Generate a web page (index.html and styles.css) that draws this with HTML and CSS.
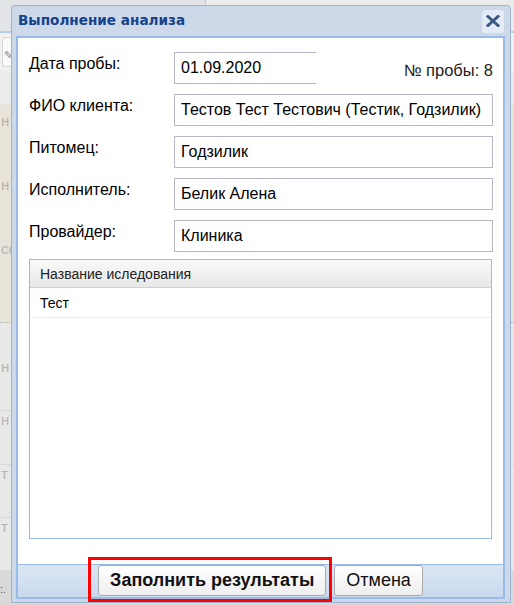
FILE: index.html
```html
<!DOCTYPE html>
<html lang="ru">
<head>
<meta charset="utf-8">
<title>Выполнение анализа</title>
<link rel="stylesheet" href="styles.css">
</head>
<body>
<div class="app">
  <div class="app-top">
    <div class="app-top-l"></div>
    <div class="app-top-r"></div>
  </div>
  <div class="app-line"></div>
  <div class="app-tools"><span class="app-tool-box"><span class="app-pencil">✎</span></span></div>
  <div class="app-gray"></div>
  <div class="app-beige">
    <div class="app-row frag">н</div>
    <div class="app-row frag">н</div>
    <div class="app-row frag">се</div>
  </div>
  <div class="app-list">
    <div class="app-item frag">н</div>
    <div class="app-item frag">н</div>
    <div class="app-item frag">т</div>
    <div class="app-item frag">т</div>
  </div>
  <div class="app-foot">:.</div>
</div>

<div class="win">
  <div class="win-head">
    <span class="win-title">Выполнение анализа</span>
    <button class="win-close" type="button" aria-label="Закрыть">
      <svg width="14" height="12" viewBox="0 0 14 12"><path d="M2 1.5 L12 10.5 M12 1.5 L2 10.5" stroke="#3c5a80" stroke-width="3" stroke-linecap="square" fill="none"/></svg>
    </button>
  </div>
  <div class="win-body">
    <div class="form">
      <div class="row">
        <label class="lbl">Дата пробы:</label>
        <div class="field field-date">01.09.2020</div>
        <span class="num">№ пробы: 8</span>
      </div>
      <div class="row">
        <label class="lbl">ФИО клиента:</label>
        <div class="field">Тестов Тест Тестович (Тестик, Годзилик)</div>
      </div>
      <div class="row">
        <label class="lbl">Питомец:</label>
        <div class="field">Годзилик</div>
      </div>
      <div class="row">
        <label class="lbl">Исполнитель:</label>
        <div class="field">Белик Алена</div>
      </div>
      <div class="row">
        <label class="lbl">Провайдер:</label>
        <div class="field">Клиника</div>
      </div>
      <div class="grid">
        <div class="grid-head">Название иследования</div>
        <div class="grid-row">Тест</div>
      </div>
    </div>
    <div class="win-foot">
      <button class="btn btn-main" type="button">Заполнить результаты</button>
      <button class="btn" type="button">Отмена</button>
    </div>
  </div>
</div>
<div class="highlight"></div>
</body>
</html>
```
FILE: styles.css
```css
html, body {
  margin: 0;
  padding: 0;
  width: 514px;
  height: 605px;
  overflow: hidden;
}
body {
  position: relative;
  font-family: "Liberation Sans", Arial, sans-serif;
  background: #e9e9e9;
}

/* background application */
.app {
  display: flex;
  flex-direction: column;
  height: 605px;
}
.app-top {
  display: flex;
  height: 31px;
}
.app-top-l {
  width: 205px;
  background: #e2e4e8;
  border-right: 1px solid #c9c9c9;
}
.app-top-r {
  flex: 1;
  background: #ebebeb;
}
.app-line {
  height: 2px;
  background: #b9cde6;
}
.app-tools {
  height: 37px;
  background: #f2f2f2;
  display: flex;
  align-items: center;
  padding-left: 2px;
}
.app-tool-box {
  display: inline-flex;
  align-items: flex-end;
  justify-content: flex-end;
  width: 40px;
  height: 30px;
  border: 1px solid #d6d6d6;
  border-radius: 3px;
  background: #fafafa;
  box-sizing: border-box;
}
.app-pencil {
  font-size: 11px;
  color: #8a8a8a;
  margin-right: 28px;
  margin-bottom: 4px;
}
.app-gray {
  height: 34px;
  background: #ececec;
}
.app-beige {
  height: 219px;
  background: #e8e4d9;
  border-bottom: 1px dotted #a8b8d0;
  display: flex;
  flex-direction: column;
  padding-top: 8px;
  box-sizing: border-box;
}
.app-row {
  height: 64px;
}
.frag {
  font-size: 15px;
  color: #b4b4b4;
  padding-left: 1px;
}
.app-list {
  height: 248px;
  background: #e8e8e8;
  display: flex;
  flex-direction: column;
  padding-top: 35px;
  box-sizing: border-box;
}
.app-item {
  height: 64px;
  border-bottom: 1px solid #d8d8d8;
  box-sizing: border-box;
}
.app-foot {
  flex: 1;
  background: #d9d9d9;
  font-size: 11px;
  color: #555;
  padding-top: 12px;
}

/* window */
.win {
  position: absolute;
  left: 11px;
  top: 5px;
  width: 500px;
  height: 598px;
  box-sizing: border-box;
  border: 1px solid #9fb3cf;
  border-radius: 4px 4px 0 0;
  background: #cdd9e9;
  display: flex;
  flex-direction: column;
}
.win-head {
  height: 30px;
  flex: none;
  display: flex;
  align-items: center;
  justify-content: space-between;
  padding: 0 6px 0 6px;
}
.win-title {
  font-family: "DejaVu Sans", Verdana, sans-serif;
  font-weight: bold;
  font-size: 13.6px;
  color: #15428b;
  padding-bottom: 2px;
}
.win-close {
  width: 22px;
  height: 23px;
  padding: 0;
  margin: 0;
  border: none;
  border-radius: 3px;
  background: #e3ebf7;
  display: flex;
  align-items: center;
  justify-content: center;
}
.win-body {
  flex: 1;
  margin: 0 5px 3px 4px;
  border: 2px solid #99bbe8;
  background: #fff;
  display: flex;
  flex-direction: column;
}
.form {
  flex: 1;
  display: flex;
  flex-direction: column;
  padding: 14px 10px 25px 11px;
}
.row {
  display: flex;
  align-items: center;
  height: 32px;
  margin-bottom: 10px;
}
.row:nth-child(5) {
  margin-bottom: 7px;
}
.lbl {
  width: 145px;
  flex: none;
  align-self: flex-start;
  padding-top: 3px;
  font-size: 16px;
  color: #000;
}
.field {
  flex: 1;
  height: 32px;
  box-sizing: border-box;
  border: 1px solid #b5b8c8;
  padding: 0 6px;
  display: flex;
  align-items: center;
  font-size: 16px;
  color: #000;
  white-space: nowrap;
  overflow: hidden;
}
.field-date {
  flex: none;
  width: 142px;
  border-right: none;
}
.num {
  margin-left: auto;
  font-size: 16.5px;
  color: #222;
  padding-top: 4px;
}
.grid {
  flex: 1;
  border: 1px solid #99bbe8;
  margin-right: 1px;
  display: flex;
  flex-direction: column;
}
.grid-head {
  height: 27px;
  border-bottom: 1px solid #d0d0d0;
  background: linear-gradient(#f9f9f9, #e8e8e8);
  font-size: 14px;
  color: #222;
  padding-left: 10px;
  display: flex;
  align-items: center;
}
.grid-row {
  height: 29px;
  border-bottom: 1px solid #ededed;
  font-size: 14px;
  color: #000;
  padding-left: 10px;
  display: flex;
  align-items: center;
}
.win-foot {
  flex: none;
  height: 32px;
  border-top: 1px solid #99bbe8;
  background: linear-gradient(#dbe6f4, #c9d9ee);
  display: flex;
  justify-content: center;
  align-items: flex-start;
  gap: 8px;
}
.btn {
  height: 31px;
  box-sizing: border-box;
  border: 1px solid #ababab;
  border-radius: 3px;
  background: linear-gradient(#ffffff, #eeeeee);
  font-family: "Liberation Sans", Arial, sans-serif;
  font-size: 18px;
  color: #111;
  padding: 0 11px;
  margin: 0;
}
.btn-main {
  font-weight: bold;
}
.highlight {
  position: absolute;
  left: 88px;
  top: 557px;
  width: 244px;
  height: 45px;
  box-sizing: border-box;
  border: 3px solid #f00;
}
```
